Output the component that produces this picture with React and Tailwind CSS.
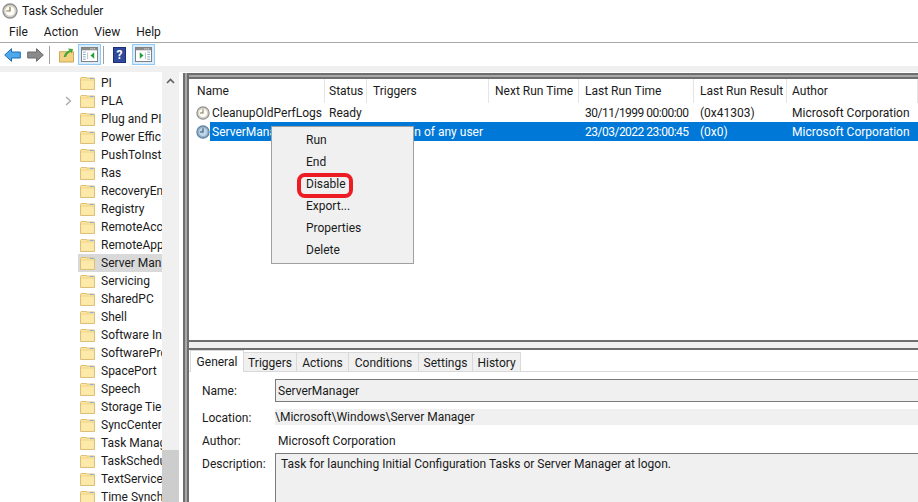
function Clock({ size = 14 }) {
  return (
    <svg width={size} height={size} viewBox="0 0 16 16" className="shrink-0">
      <circle cx="8" cy="8" r="7" fill="#d8d4cc" stroke="#8f8f8f" strokeWidth="1.3" />
      <circle cx="8" cy="8" r="5.2" fill="#fdfdfa" stroke="#c9c4b8" strokeWidth="0.8" />
      <path d="M8 3.8V8H4.4" fill="none" stroke="#8a7440" strokeWidth="1.2" />
    </svg>
  );
}

function ClockSel() {
  return (
    <svg width="14" height="14" viewBox="0 0 16 16" className="shrink-0">
      <circle cx="8" cy="8" r="7" fill="#8fb0cc" stroke="#5f7f9c" strokeWidth="1.3" />
      <circle cx="8" cy="8" r="5.2" fill="#bfd6ea" stroke="#8aa6c0" strokeWidth="0.8" />
      <path d="M8 3.8V8H4.4" fill="none" stroke="#2f4f6f" strokeWidth="1.2" />
    </svg>
  );
}

function Folder() {
  return (
    <svg width="15" height="13" viewBox="0 0 15 13" className="shrink-0">
      <path d="M0.5 1.5V12.5H14.5V1H7L6 0.5H1Z" fill="#fbe6a2" stroke="#dcc07a" strokeWidth="1" />
      <path d="M1 3H14" stroke="#f0d68c" strokeWidth="1" />
      <path d="M10 1.5H13.5" stroke="#7fb0e0" strokeWidth="1" />
      <path d="M1.5 11.5H13.5V4H1.5Z" fill="#fde9a9" />
    </svg>
  );
}

function WinIcon({ mirror }) {
  return (
    <svg width="17" height="15" viewBox="0 0 18 16">
      <rect x="0.5" y="0.5" width="17" height="15" fill="#fff" stroke="#7a7a7a" />
      <rect x="1" y="1" width="16" height="2.5" fill="#8a8a8a" />
      <path d="M12 2H13M14 2H15M10 2H11" stroke="#fff" />
      {mirror ? (
        <>
          <path d="M11 6V13" stroke="#b9b9b9" />
          <path d="M13 5.5H16M13 8H16M13 10.5H16M13 13H16" stroke="#7da7d0" strokeWidth="1" />
          <path d="M5 5.5L9 9L5 12.5Z" fill="#1fa22e" />
        </>
      ) : (
        <>
          <path d="M7 6V13" stroke="#b9b9b9" />
          <path d="M2 5.5H5M2 8H5M2 10.5H5M2 13H5" stroke="#7da7d0" strokeWidth="1" />
          <path d="M14 5.5L10 9L14 12.5Z" fill="#1fa22e" />
        </>
      )}
    </svg>
  );
}

const tree = [
  "PI", "PLA", "Plug and PI", "Power Effic", "PushToInsta", "Ras", "RecoveryEn", "Registry",
  "RemoteAcc", "RemoteApp", "Server Man", "Servicing", "SharedPC", "Shell", "Software In",
  "SoftwarePro", "SpacePort", "Speech", "Storage Tie", "SyncCenter", "Task Manag", "TaskSchedu",
  "TextServices", "Time Synch",
];

const cols = [
  ["Name", "w-[135px] pl-[7px]"],
  ["Status", "w-[42px] pl-[4px]"],
  ["Triggers", "w-[122px] pl-[6px]"],
  ["Next Run Time", "w-[90px] pl-[6px]"],
  ["Last Run Time", "w-[115px] pl-[6px]"],
  ["Last Run Result", "w-[93px] pl-[6px]"],
  ["Author", "w-[131px] pl-[5px]"],
];

function Row({ sel, name, status, trig, last, result }) {
  const c = sel ? "text-white" : "text-[#1a1a1a]";
  return (
    <div className="flex h-[19px] items-center">
      <div className="w-[20px] pl-[6px] shrink-0">{sel ? <ClockSel /> : <Clock />}</div>
      <div className={`flex flex-1 h-full items-center ${sel ? "bg-[#0078d7]" : ""} ${c}`}>
        <div className="w-[115px] pl-[2px] shrink-0 whitespace-nowrap">{name}</div>
        <div className="w-[42px] pl-[4px] shrink-0">{status}</div>
        <div className="w-[122px] shrink-0 whitespace-nowrap text-right pr-[6px]">{trig}</div>
        <div className="w-[90px] shrink-0" />
        <div className="w-[115px] pl-[6px] shrink-0 whitespace-nowrap tracking-[-0.5px]">{last}</div>
        <div className="w-[93px] pl-[6px] shrink-0 whitespace-nowrap">{result}</div>
        <div className="w-[131px] pl-[5px] shrink-0 whitespace-nowrap">Microsoft Corporation</div>
      </div>
    </div>
  );
}

export default function App() {
  return (
    <div className="w-[918px] h-[502px] overflow-hidden bg-white relative flex flex-col text-[12px] leading-[16px] text-[#1a1a1a] font-['Roboto',sans-serif]">
      {/* title bar */}
      <div className="h-[21px] flex items-center pl-[2px] gap-[4px] text-[12px] shrink-0">
        <Clock size={16} />
        <span>Task Scheduler</span>
      </div>
      {/* menu */}
      <div className="h-[21px] flex items-center pl-[9px] gap-[16px] border-b border-[#a8a8a8] box-content shrink-0">
        <span>File</span><span>Action</span><span>View</span><span>Help</span>
      </div>
      {/* toolbar */}
      <div className="h-[23px] flex items-center pl-[4px] shrink-0">
        <svg width="17" height="14" viewBox="0 0 17 14">
          <path d="M0.7 7L7.5 0.7V4H16.3V10H7.5V13.3Z" fill="#4fa8ea" stroke="#1f6fb5" strokeWidth="1" />
        </svg>
        <svg width="17" height="14" viewBox="0 0 17 14" className="ml-[6px]">
          <path d="M16.3 7L9.5 0.7V4H0.7V10H9.5V13.3Z" fill="#8a8a8a" stroke="#6a6a6a" strokeWidth="1" />
        </svg>
        <div className="w-px h-[18px] bg-[#a0a0a0] ml-[5px] mr-[9px]" />
        <svg width="15" height="16" viewBox="0 0 16 16">
          <path d="M0.5 4.5H15.5V15.5H0.5Z" fill="#f3d383" stroke="#c9a24f" />
          <path d="M5 10C6 6 8 4 11 3L9.5 1L15 1.5L13.5 6.5L12.5 4.5C10 5.5 8 8 7.5 10Z" fill="#4aa63a" />
        </svg>
        <div className="w-[23px] h-[21px] ml-[4px] bg-[#d9ecfc] border border-[#90c8f6] flex items-center justify-center">
          <WinIcon />
        </div>
        <div className="w-px h-[18px] bg-[#a0a0a0] ml-[2px] mr-[9px]" />
        <div className="w-[13px] h-[16px] bg-[#2f4a9c] border border-[#1c2f70] flex items-center justify-center text-white font-bold text-[12px] leading-none">?</div>
        <div className="w-[23px] h-[21px] ml-[6px] bg-[#d9ecfc] border border-[#90c8f6] flex items-center justify-center">
          <WinIcon mirror />
        </div>
      </div>
      <div className="h-[6px] bg-[#f0f0f0] shrink-0" />
      {/* body */}
      <div className="flex flex-1 min-h-0">
        {/* tree */}
        <div className="w-[162px] shrink-0 overflow-hidden pt-[2px] pl-[78px]">
          {tree.map((t) => (
            <div key={t} className={`relative h-[18px] flex items-center gap-[6px] pl-[2px] whitespace-nowrap ${t === "Server Man" ? "bg-[#d9d9d9]" : ""}`}>
              {t === "PLA" && (
                <svg width="7" height="10" viewBox="0 0 7 10" className="absolute left-[-13px] top-[4px]">
                  <path d="M1 1L5.5 5L1 9" fill="none" stroke="#a6a6a6" strokeWidth="1.3" />
                </svg>
              )}
              <Folder />
              <span>{t}</span>
            </div>
          ))}
        </div>
        {/* scrollbar */}
        <div className="w-[17px] shrink-0 bg-[#f0f0f0] flex flex-col justify-between">
          <div className="h-[17px] flex items-center justify-center">
            <svg width="9" height="6" viewBox="0 0 9 6"><path d="M1 5L4.5 1.5L8 5" fill="none" stroke="#606060" strokeWidth="1.6" /></svg>
          </div>
          <div className="h-[52px] bg-[#cdcdcd]" />
        </div>
        {/* splitter */}
        <div className="w-[4px] shrink-0 bg-white" />
        {/* right */}
        <div className="flex-1 min-w-0 mt-px flex flex-col border-l-[6px] border-double border-[#6e6e6e] bg-[#a8a8a8]">
          {/* list pane */}
          <div className="h-[269px] shrink-0 border-t-[6px] border-b-2 border-double border-b-solid border-[#6e6e6e] bg-[#a8a8a8] overflow-hidden">
            <div className="bg-white h-full pl-px">
              <div className="flex h-[24px]">
                {cols.map(([n, w]) => (
                  <div key={n} className={`${w} shrink-0 whitespace-nowrap flex items-center border-r border-[#e5e5e5]`}>{n}</div>
                ))}
              </div>
              <Row name="CleanupOldPerfLogs" status="Ready" last="30/11/1999 00:00:00" result="(0x41303)" />
              <Row sel name="ServerManager" status="Ready" trig="At log on of any user" last="23/03/2022 23:00:45" result="(0x0)" />
            </div>
          </div>
          <div className="h-[6px] shrink-0 bg-[#f0f0f0]" />
          {/* detail pane */}
          <div className="flex-1 min-h-0 border-t-2 border-[#6e6e6e] bg-white overflow-hidden flex flex-col">
            <div className="flex items-end h-[22px] shrink-0 border-b border-[#d9d9d9] pl-px">
              <div className="w-[54px] h-[22px] bg-white border border-b-0 border-[#d9d9d9] flex items-center justify-center relative top-px z-10">General</div>
              {["Triggers", "Actions", "Conditions", "Settings", "History"].map((t, i) => (
                <div key={t} className={`h-[19px] pt-px bg-[#f0f0f0] border border-b-0 border-l-0 border-[#d9d9d9] flex items-center justify-center ${["w-[53px]", "w-[52px]", "w-[70px]", "w-[54px]", "w-[48px]"][i]}`}>{t}</div>
              ))}
            </div>
            <div className="pl-[13px] pt-[7px] flex-1 min-h-0">
              <div className="flex items-center h-[23px]">
                <div className="w-[73px] shrink-0">Name:</div>
                <div className="flex-1 h-[23px] border border-r-0 border-[#7a7a7a] bg-[#f0f0f0] pl-[2px] flex items-center">ServerManager</div>
              </div>
              <div className="flex items-center h-[16px] mt-[7px]">
                <div className="w-[73px] shrink-0 pt-[2px]">Location:</div>
                <div className="flex-1 h-[16px] bg-[#f0f0f0] flex items-center">\Microsoft\Windows\Server Manager</div>
              </div>
              <div className="flex items-center h-[16px] mt-[8px]">
                <div className="w-[76px] shrink-0">Author:</div>
                <div>Microsoft Corporation</div>
              </div>
              <div className="flex mt-[4px] h-[60px]">
                <div className="w-[73px] shrink-0 pt-[3px]">Description:</div>
                <div className="flex-1 border border-r-0 border-[#7a7a7a] bg-[#f0f0f0] pl-[5px] pt-[2px] whitespace-nowrap">Task for launching Initial Configuration Tasks or Server Manager at logon.</div>
              </div>
            </div>
          </div>
        </div>
      </div>

      {/* context menu */}
      <div className="absolute left-[271px] top-[126px] w-[143px] h-[138px] bg-[#f0f0f0] border border-[#a0a0a0] pl-[34px] pt-[2px] text-[#1a1a1a]">
        {["Run", "End", "Disable", "Export...", "Properties", "Delete"].map((m) => (
          <div key={m} className="h-[22px] flex items-center">{m}</div>
        ))}
      </div>
      {/* annotation */}
      <div className="absolute left-[297px] top-[173px] w-[56px] h-[25px] rounded-[8px] border-[4px] border-[#ed1c24]" />
    </div>
  );
}
